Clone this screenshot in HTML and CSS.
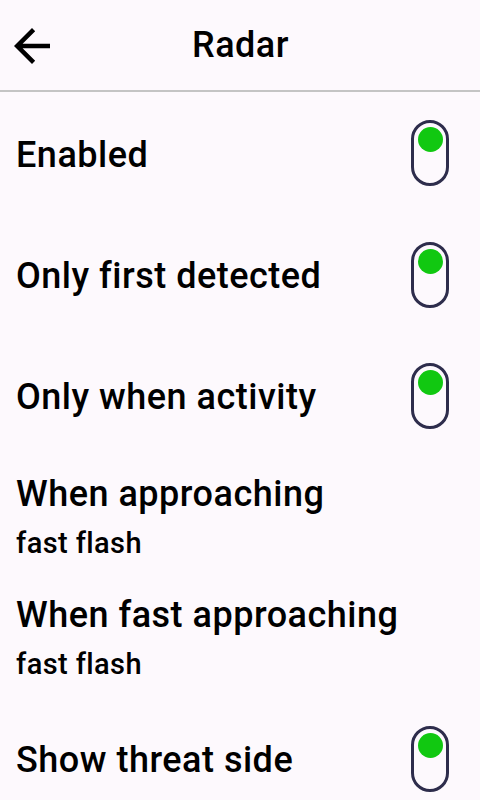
FILE: index.html
```html
<!DOCTYPE html>
<html>
<head>
<meta charset="utf-8">
<link rel="stylesheet" href="styles.css">
</head>
<body>
<div class="screen">
  <header class="header">
    <svg class="back" viewBox="0 0 24 24" width="54" height="54"><path d="M20 11H7.83l5.59-5.59L12 4l-8 8 8 8 1.41-1.41L7.83 13H20v-2z" fill="#000"/></svg>
    <div class="title">Radar</div>
  </header>
  <div class="list">
    <div class="row"><div class="label">Enabled</div><div class="toggle"><span class="dot"></span></div></div>
    <div class="row"><div class="label">Only first detected</div><div class="toggle"><span class="dot"></span></div></div>
    <div class="row"><div class="label">Only when activity</div><div class="toggle"><span class="dot"></span></div></div>
    <div class="row"><div class="text"><div class="label">When approaching</div><div class="sub">fast flash</div></div></div>
    <div class="row"><div class="text"><div class="label">When fast approaching</div><div class="sub">fast flash</div></div></div>
    <div class="row"><div class="label">Show threat side</div><div class="toggle"><span class="dot"></span></div></div>
  </div>
</div>
</body>
</html>
```
FILE: styles.css
```css
html, body {
  margin: 0;
  padding: 0;
  background: #fdf9fd;
}
body {
  font-family: Roboto, "Liberation Sans", sans-serif;
  color: #000;
  overflow: hidden;
}
.screen {
  width: 480px;
  height: 800px;
  overflow: hidden;
}
.header {
  position: relative;
  height: 90px;
  border-bottom: 2px solid #c4c4c4;
  display: flex;
  align-items: center;
  justify-content: center;
}
.back {
  position: absolute;
  left: 5px;
  top: 19px;
}
.title {
  font-size: 36px;
  font-weight: 500;
  letter-spacing: 0.5px;
  padding-left: 1px;
}
.list {
  display: flex;
  flex-direction: column;
}
.row {
  height: 121px;
  display: flex;
  align-items: center;
  justify-content: space-between;
  padding: 0 31px 0 16px;
}
.row:first-child { height: 122px; }
.label {
  font-size: 36px;
  font-weight: 500;
  line-height: 40px;
  letter-spacing: 0.5px;
}
.row > .label {
  margin-top: 3px;
}
.text {
  display: flex;
  flex-direction: column;
  gap: 12px;
}
.sub {
  font-size: 29px;
  font-weight: 500;
  line-height: 34px;
  letter-spacing: 0.4px;
}
.toggle {
  box-sizing: border-box;
  width: 38px;
  height: 66px;
  border: 3px solid #2e2d4c;
  border-radius: 19px;
  display: flex;
  justify-content: center;
  padding-top: 4px;
}
.dot {
  width: 25px;
  height: 25px;
  border-radius: 50%;
  background: #11c811;
}
```
